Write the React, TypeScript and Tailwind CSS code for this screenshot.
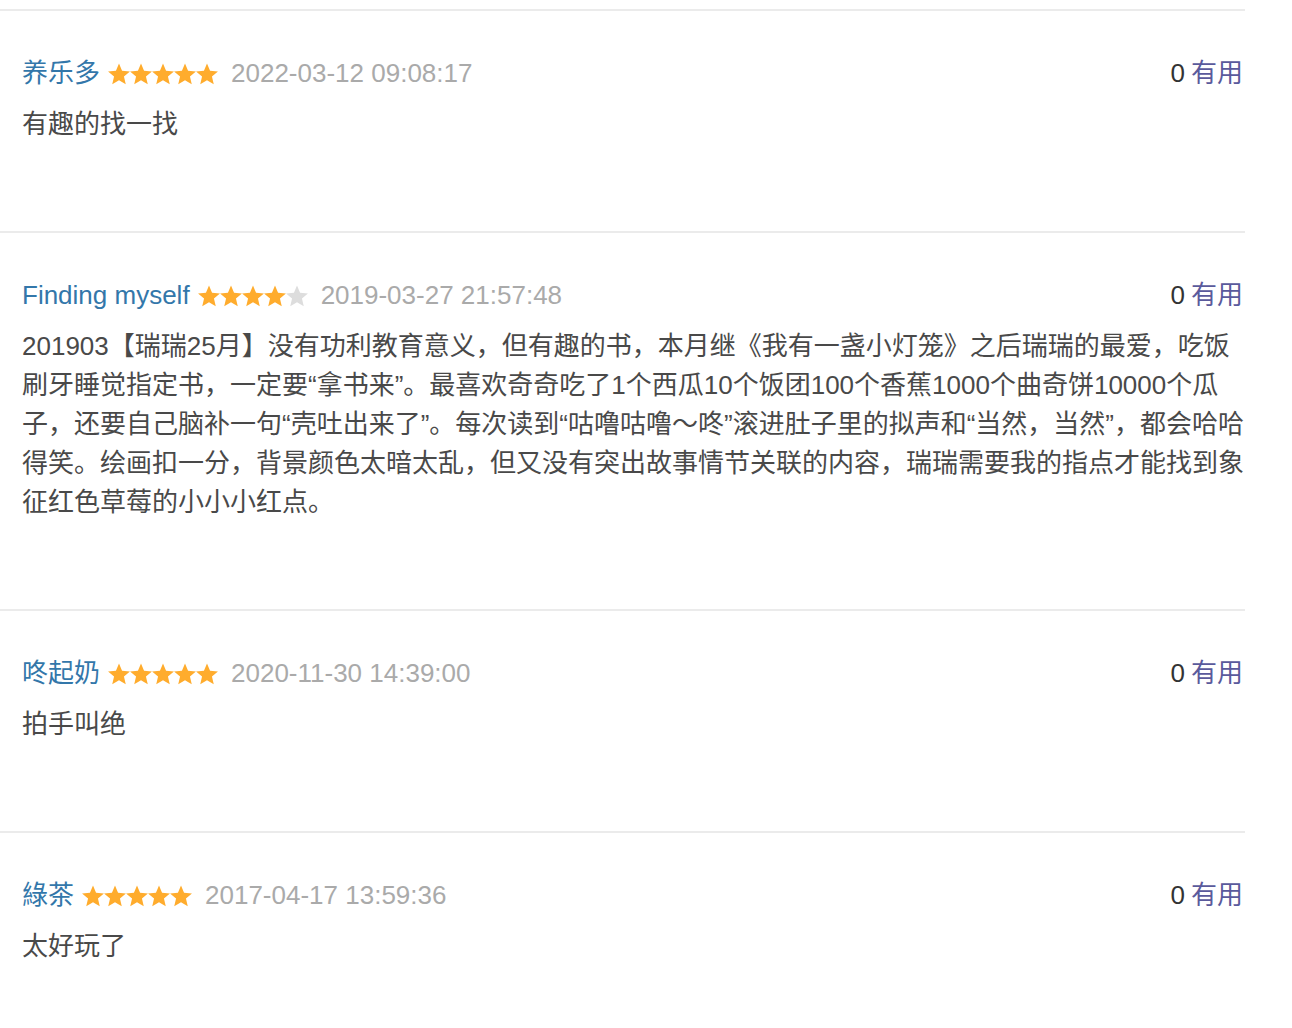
import React from "react";

type Review = { name: string; stars: number; date: string; text: string };

const reviews: Review[] = [
  { name: "养乐多", stars: 5, date: "2022-03-12 09:08:17", text: "有趣的找一找" },
  {
    name: "Finding myself",
    stars: 4,
    date: "2019-03-27 21:57:48",
    text:
      "201903【瑞瑞25月】没有功利教育意义，但有趣的书，本月继《我有一盏小灯笼》之后瑞瑞的最爱，吃饭刷牙睡觉指定书，一定要“拿书来”。最喜欢奇奇吃了1个西瓜10个饭团100个香蕉1000个曲奇饼10000个瓜子，还要自己脑补一句“壳吐出来了”。每次读到“咕噜咕噜～咚”滚进肚子里的拟声和“当然，当然”，都会哈哈得笑。绘画扣一分，背景颜色太暗太乱，但又没有突出故事情节关联的内容，瑞瑞需要我的指点才能找到象征红色草莓的小小小红点。",
  },
  { name: "咚起奶", stars: 5, date: "2020-11-30 14:39:00", text: "拍手叫绝" },
  { name: "綠茶", stars: 5, date: "2017-04-17 13:59:36", text: "太好玩了" },
];

function Star({ filled }: { filled: boolean }) {
  return (
    <svg width="22" height="22" viewBox="0 0 22 22" className="block">
      <polygon
        points="11,0.5 14.06,7.79 21.94,8.45 15.95,13.61 17.76,21.3 11,17.2 4.24,21.3 6.05,13.61 0.06,8.45 7.94,7.79"
        fill={filled ? "#ffac2d" : "#dddddd"}
      />
    </svg>
  );
}

function Stars({ n }: { n: number }) {
  return (
    <span className="flex items-center">
      {[0, 1, 2, 3, 4].map((i) => (
        <Star key={i} filled={i < n} />
      ))}
    </span>
  );
}

export default function App() {
  return (
    <div
      className="w-[1245px] pt-[9px] bg-white"
      style={{ fontFamily: '"Liberation Sans", Arial, "Noto Sans CJK SC", sans-serif' }}
    >
      {reviews.map((r, idx) => (
        <div key={idx} className="border-t-2 border-[#ebebeb] pl-[22px] pt-[43px] pb-[87px]">
          <div className="flex items-center justify-between h-[39px] pr-[2px] text-[26px] leading-[39px]">
            <div className="flex items-center">
              <span className="text-[#3377aa]">{r.name}</span>
              <span className="ml-[8px]">
                <Stars n={r.stars} />
              </span>
              <span className="ml-[13px] text-[#aaaaaa]">{r.date}</span>
            </div>
            <div>
              <span className="text-[#333333]">0</span>
              <span className="ml-[6px] text-[#5a5a9c]">有用</span>
            </div>
          </div>
          <p className="mt-[12px] text-[26px] leading-[39px] text-[#494949] break-all">{r.text}</p>
        </div>
      ))}
    </div>
  );
}
